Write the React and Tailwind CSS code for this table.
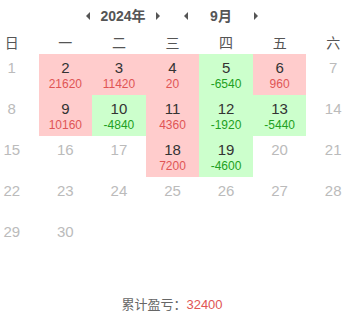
import React from "react";

const data = {
  2: 21620,
  3: 11420,
  4: 20,
  5: -6540,
  6: 960,
  9: 10160,
  10: -4840,
  11: 4360,
  12: -1920,
  13: -5440,
  18: 7200,
  19: -4600,
};

const weekdays = ["日", "一", "二", "三", "四", "五", "六"];

const Caret = ({ dir }) => (
  <svg width="6" height="8" viewBox="0 0 6 8" className="shrink-0">
    {dir === "left" ? (
      <polygon points="5,0 5,8 1,4" fill="#555" />
    ) : (
      <polygon points="1,0 1,8 5,4" fill="#555" />
    )}
  </svg>
);

const Picker = ({ label }) => (
  <div className="flex items-center">
    <Caret dir="left" />
    <div className="w-[64px] text-center">{label}</div>
    <Caret dir="right" />
  </div>
);

const DayCell = ({ day }) => {
  if (!day) return <div className="h-[41px]" />;
  const v = data[day];
  const has = v !== undefined;
  const bg = !has ? "" : v >= 0 ? "bg-[#ffcccc]" : "bg-[#ccffcc]";
  return (
    <div className={`h-[41px] flex flex-col items-center pt-[5px] ${bg}`}>
      <div className={`text-[15px] leading-[18px] ${has ? "text-[#333]" : "text-[#bbb]"}`}>{day}</div>
      {has && (
        <div className={`text-[12px] leading-[14px] ${v >= 0 ? "text-[#e05555]" : "text-[#22a022]"}`}>{v}</div>
      )}
    </div>
  );
};

export default function App() {
  const total = Object.values(data).reduce((a, b) => a + b, 0);
  // September 2024 starts on Sunday
  const cells = [];
  for (let d = 1; d <= 30; d++) cells.push(d);
  while (cells.length % 7) cells.push(null);

  return (
    <div
      className="w-[344px] h-[329px] bg-white overflow-hidden"
      style={{ fontFamily: '"Liberation Sans", "Noto Sans CJK SC", sans-serif' }}
    >
      <div className="h-[32px] flex items-center justify-center gap-[22px] text-[14px] font-bold text-[#555]">
        <Picker label="2024年" />
        <Picker label="9月" />
      </div>
      <div className="w-[375px] -ml-[15px]">
        <div className="grid grid-cols-7 h-[22px] items-center text-[14px] text-[#555]">
          {weekdays.map((w) => (
            <div key={w} className="text-center leading-[22px]">
              {w}
            </div>
          ))}
        </div>
        <div className="grid grid-cols-7">
          {cells.map((d, i) => (
            <DayCell key={i} day={d} />
          ))}
        </div>
      </div>
      <div className="mt-[37px] text-center text-[13px] leading-[18px] text-[#666]">
        累计盈亏：<span className="text-[#e05555]">{total}</span>
      </div>
    </div>
  );
}
